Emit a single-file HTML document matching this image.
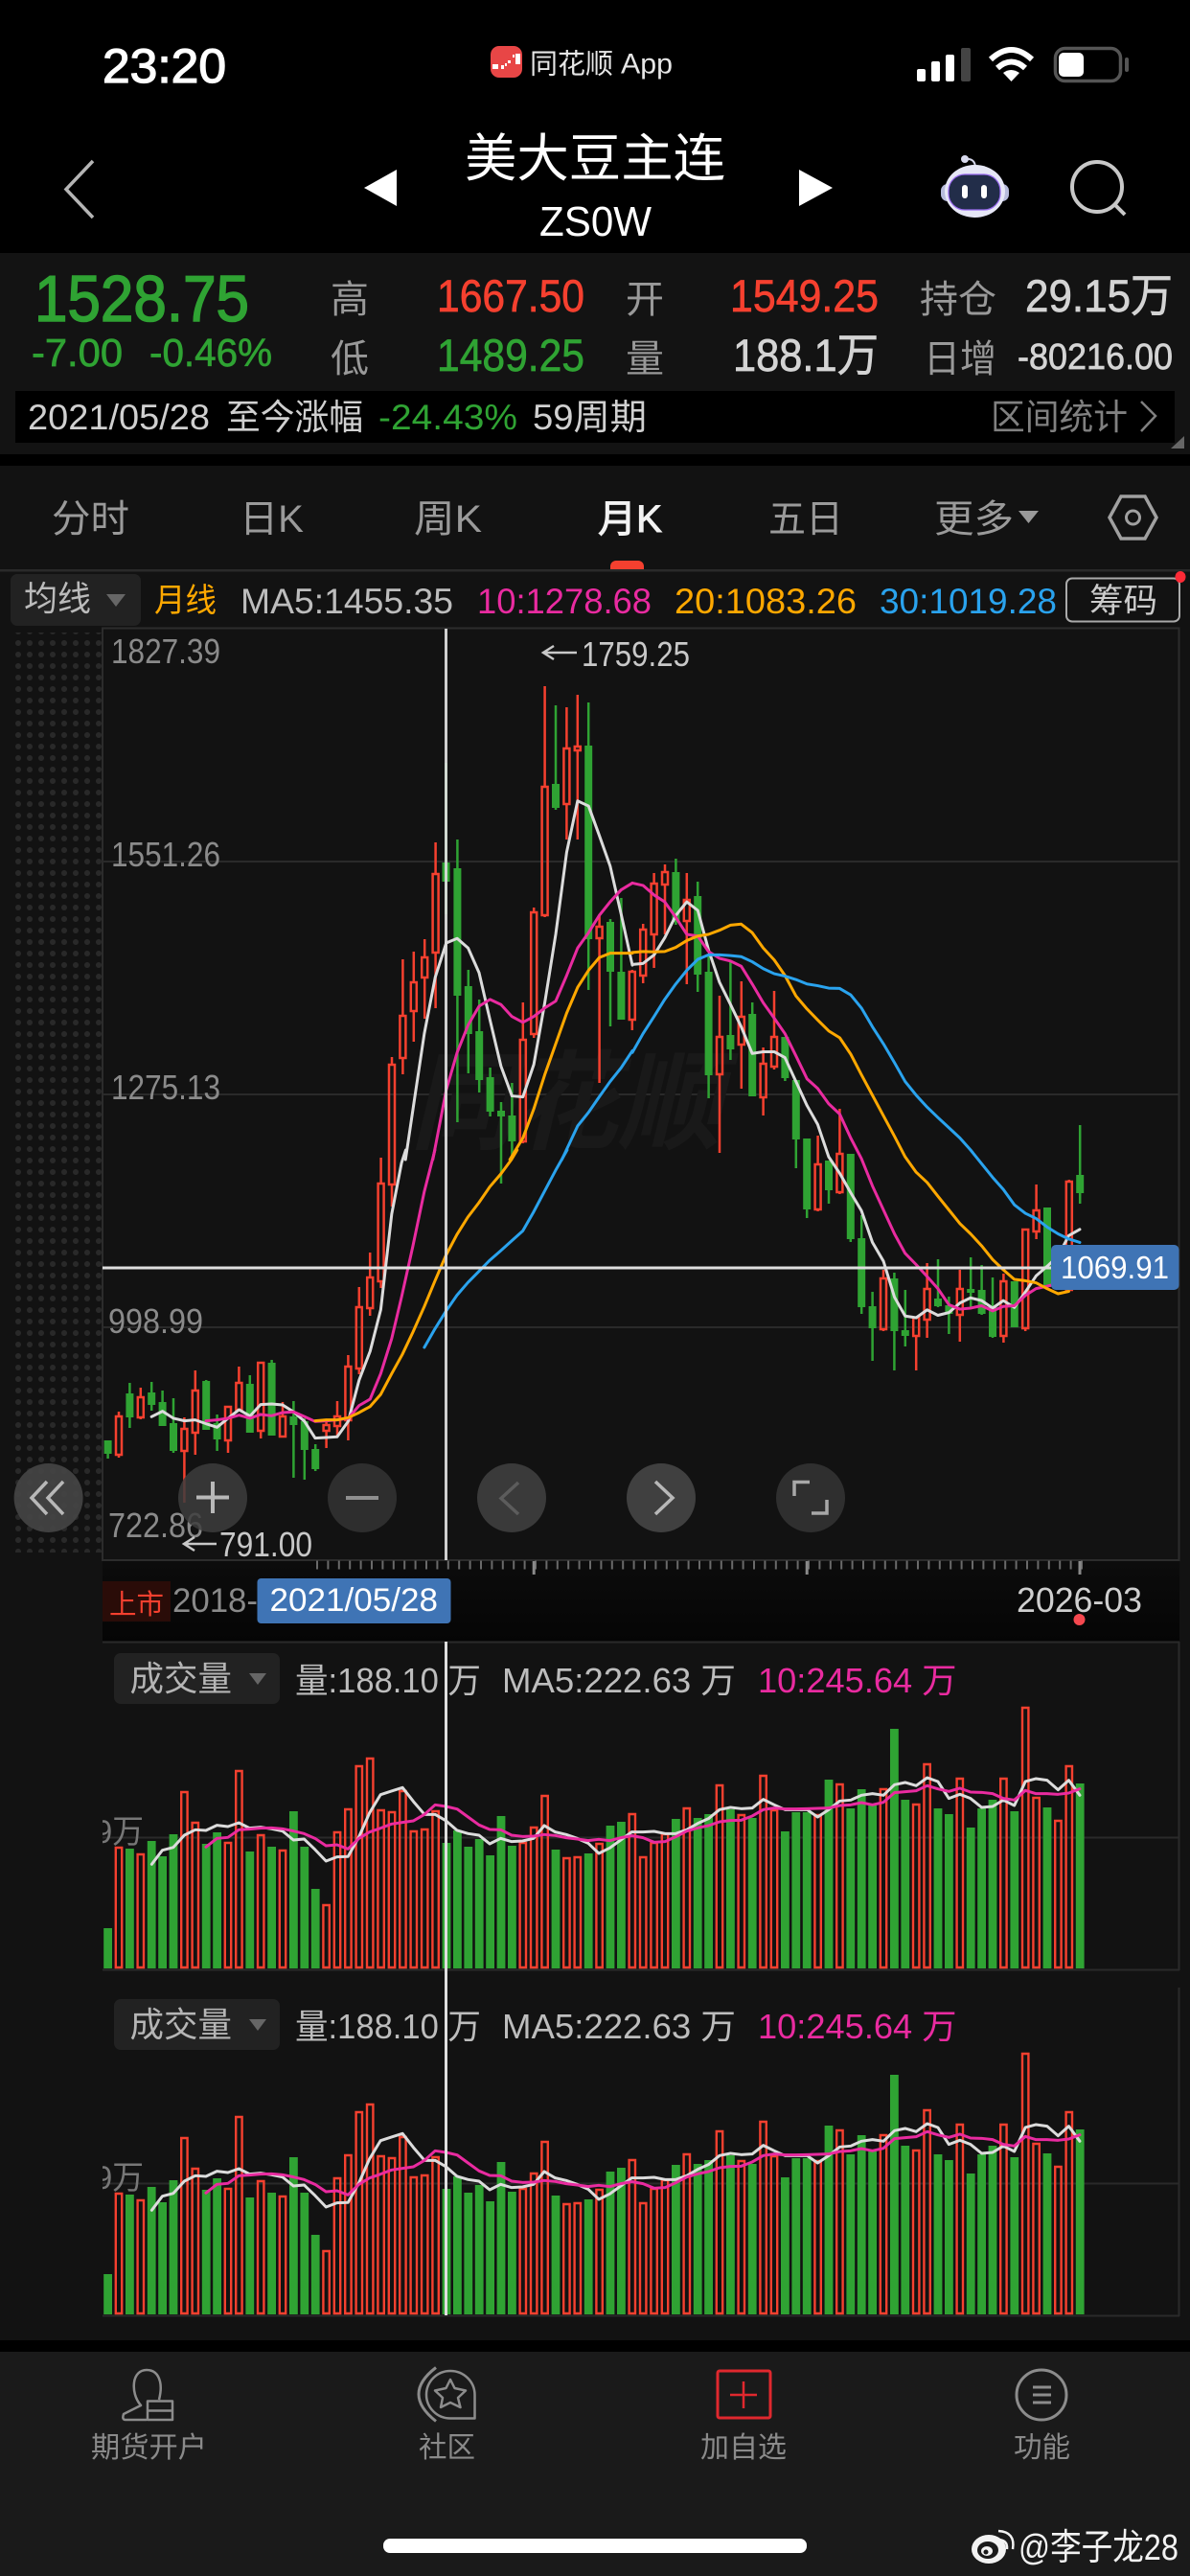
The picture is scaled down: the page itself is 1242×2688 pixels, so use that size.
<!DOCTYPE html>
<html lang="zh-CN">
<head>
<meta charset="utf-8">
<title>美大豆主连 ZS0W</title>
<style>
html,body{margin:0;padding:0;background:#000;width:1242px;height:2688px;overflow:hidden}
svg{display:block;font-family:"Liberation Sans","Noto Sans CJK SC",sans-serif}
text{white-space:pre}
.m{stroke-width:.7;paint-order:stroke}
.g{fill:#2fa333;stroke:#2fa333}
.r{fill:#f5402f;stroke:#f5402f}
.w{fill:#d4d4d4;stroke:#d4d4d4}
.l{fill:none;stroke-width:3;stroke-linejoin:round;stroke-linecap:round}
.l polyline,.l path{vector-effect:non-scaling-stroke;fill:none}
.n{fill:#8a8a8a;font-size:36px}
.t{font-size:40px;fill:#9a9a9a}
.b{font-size:30px;fill:#8a8a8a}
.v{font-size:36px;fill:#bdbdbd}
</style>
</head>
<body>
<svg xmlns="http://www.w3.org/2000/svg" width="1242" height="2688" viewBox="0 0 1242 2688">
<defs>
<pattern id="dots" x="13" y="5" width="12" height="12" patternUnits="userSpaceOnUse"><circle cx="6" cy="6" r="3" fill="#292929"/></pattern>
<linearGradient id="ax" x1="0" y1="0" x2="0" y2="1"><stop offset="0" stop-color="#0c0c0c"/><stop offset="1" stop-color="#050505"/></linearGradient>
<clipPath id="c1"><rect x="107" y="1880" width="60" height="60"/></clipPath>
<clipPath id="c2"><rect x="107" y="2241" width="60" height="60"/></clipPath>
<g id="vol">
<path fill="none" stroke="#2fa333" stroke-width="8.8" d="M112.6 2054V2012M135.4 2054V1929M158.2 2054V1921M169.6 2054V1937M181 2054V1914M215.2 2054V1924M226.6 2054V1912M260.8 2054V1932M283.6 2054V1927M306.4 2054V1890M317.8 2054V1927M329.2 2054V1971M466 2054V1923M477.4 2054V1910M488.8 2054V1927M500.2 2054V1919M511.6 2054V1936M523 2054V1895M534.4 2054V1926M580 2054V1930M614.2 2054V1934M637 2054V1905M648.4 2054V1901M705.4 2054V1898M728.2 2054V1897M739.6 2054V1893M762.4 2054V1888M785.2 2054V1897M819.4 2054V1911M830.8 2054V1891M842.2 2054V1891M865 2054V1857M887.8 2054V1887M899.2 2054V1867M910.6 2054V1884M933.4 2054V1804M944.8 2054V1878M979 2054V1887M990.4 2054V1893M1013.2 2054V1907M1024.6 2054V1887M1036 2054V1878M1058.8 2054V1890M1093 2054V1886M1127.2 2054V1861"/>
<path fill="none" stroke="#f5402f" stroke-width="2.4" d="M120.8 1928h6.4V2053h-6.4zM143.6 1935h6.4V2053h-6.4zM189.2 1870h6.4V2053h-6.4zM200.6 1902h6.4V2053h-6.4zM234.8 1923h6.4V2053h-6.4zM246.2 1848h6.4V2053h-6.4zM269 1915h6.4V2053h-6.4zM291.8 1931h6.4V2053h-6.4zM337.4 1988h6.4V2053h-6.4zM348.8 1912h6.4V2053h-6.4zM360.2 1888h6.4V2053h-6.4zM371.6 1843h6.4V2053h-6.4zM383 1835h6.4V2053h-6.4zM394.4 1889h6.4V2053h-6.4zM405.8 1891h6.4V2053h-6.4zM417.2 1869h6.4V2053h-6.4zM428.6 1911h6.4V2053h-6.4zM440 1909h6.4V2053h-6.4zM451.4 1890h6.4V2053h-6.4zM542.6 1923h6.4V2053h-6.4zM554 1907h6.4V2053h-6.4zM565.4 1874h6.4V2053h-6.4zM588.2 1939h6.4V2053h-6.4zM599.6 1938h6.4V2053h-6.4zM622.4 1924h6.4V2053h-6.4zM656.6 1893h6.4V2053h-6.4zM668 1938h6.4V2053h-6.4zM679.4 1923h6.4V2053h-6.4zM690.8 1914h6.4V2053h-6.4zM713.6 1887h6.4V2053h-6.4zM747.8 1863h6.4V2053h-6.4zM770.6 1894h6.4V2053h-6.4zM793.4 1853h6.4V2053h-6.4zM804.8 1889h6.4V2053h-6.4zM850.4 1894h6.4V2053h-6.4zM873.2 1862h6.4V2053h-6.4zM918.8 1867h6.4V2053h-6.4zM953 1883h6.4V2053h-6.4zM964.4 1841h6.4V2053h-6.4zM998.6 1856h6.4V2053h-6.4zM1044.2 1856h6.4V2053h-6.4zM1067 1782h6.4V2053h-6.4zM1078.4 1876h6.4V2053h-6.4zM1101.2 1900h6.4V2053h-6.4zM1112.6 1843h6.4V2053h-6.4z"/>
<g class="l" transform="translate(80 1720) scale(.3697 .3333)">
<polyline stroke="#dcdcdc" points="212,676 242,632 273,623 304,585 335,568 365,570 396,554 427,558 458,546 488,563 519,560 550,565 581,572 612,600 642,597 673,630 704,666 735,653 766,652 797,590 827,515 858,458 889,447 920,436 951,480 982,520 1012,520 1043,540 1074,570 1105,580 1136,585 1166,612 1197,595 1228,605 1259,603 1290,595 1320,555 1351,575 1382,583 1413,595 1444,610 1474,642 1505,625 1536,600 1567,575"/>
<polyline stroke="#e92ba0" points="365,622 396,595 427,592 458,568 488,566 519,563 550,562 581,565 612,572 642,580 673,595 704,618 735,615 766,628 797,595 827,575 858,563 889,550 920,545 951,540 982,520 1012,490 1043,495 1074,503 1105,528 1136,553 1166,567 1197,568 1228,585 1259,589 1290,588 1320,583 1351,586 1382,593 1413,597 1444,602 1474,598 1505,602 1536,593 1567,587"/>
</g>
<g class="l" transform="translate(660 1720) scale(.3712 .3333)">
<polyline stroke="#dcdcdc" points="0,575 30,575 61,573 92,580 122,580 153,568 184,548 214,533 245,505 276,498 306,502 337,500 368,473 399,490 429,505 460,505 491,505 521,528 552,505 583,478 614,475 644,460 675,455 706,460 737,427 767,420 798,430 829,405 859,417 890,470 921,457 951,470 982,498 1013,495 1043,475 1074,492 1105,417 1135,408 1166,413 1197,443 1227,413 1258,460"/>
<polyline stroke="#e92ba0" points="0,587 30,593 61,607 92,605 122,590 153,572 184,562 214,555 245,543 276,539 306,538 337,525 368,505 399,500 429,503 460,503 491,502 521,501 552,500 583,492 614,490 644,483 675,490 706,482 737,452 767,449 798,446 829,430 859,440 890,448 921,438 951,450 982,451 1013,455 1043,470 1074,475 1105,445 1135,455 1166,455 1197,457 1227,453 1258,440"/>
</g>
</g>
</defs>

<rect width="1242" height="2688" fill="#000"/>

<!-- status bar -->
<text x="107" y="86" font-size="50" fill="#fff" stroke="#fff" stroke-width="1.300" textLength="129" lengthAdjust="spacingAndGlyphs">23:20</text>
<rect x="512" y="48" width="33" height="33" rx="9" fill="#e84646"/>
<path d="M514 67h6v5h-6zM523 68h3v4h-3zM527 66h2v3h-2zM530 63h3v3h-3zM535 57h2v3h-2zM538 56h5v11h-5z" fill="#fff"/>
<text x="553" y="76.500" font-size="29" fill="#e6e6e6" textLength="87" lengthAdjust="spacingAndGlyphs">同花顺</text>
<text x="648" y="76.500" font-size="30" fill="#e6e6e6" textLength="54" lengthAdjust="spacingAndGlyphs">App</text>
<g fill="#fff">
<rect x="957" y="72" width="9" height="13" rx="2"/><rect x="972" y="64" width="9" height="21" rx="2"/><rect x="987" y="57" width="9" height="28" rx="2"/>
<rect x="1003" y="50" width="10" height="35" rx="2" fill="#444"/>
<path d="M1047 76Q1055 70 1064 76L1055.500 85Z"/>
</g>
<path d="M1034 62Q1055.500 42 1077 62M1041 71Q1055.500 58 1070 71" stroke="#fff" stroke-width="6" fill="none"/>
<rect x="1101.500" y="50.500" width="68" height="34" rx="10" fill="none" stroke="#555" stroke-width="3.500"/>
<rect x="1105" y="55" width="26" height="25" rx="5" fill="#fff"/>
<rect x="1174" y="60" width="4" height="15" rx="2" fill="#555"/>

<!-- nav header -->
<path d="M97 168L69 197.500L97 227" fill="none" stroke="#b5b5b5" stroke-width="3.500"/>
<polygon points="414,177 414,215 380,196" fill="#fff"/>
<polygon points="834,177 834,215 869,196" fill="#fff"/>
<text x="485" y="184" font-size="54" fill="#fff" textLength="272" lengthAdjust="spacingAndGlyphs">美大豆主连</text>
<text x="563" y="246" font-size="44" fill="#fff" textLength="117" lengthAdjust="spacingAndGlyphs">ZS0W</text>
<!-- robot -->
<path d="M1008 166Q1017 165 1018 174" fill="none" stroke="#d4d6ea" stroke-width="2"/>
<circle cx="1007" cy="166" r="4" fill="#d8daee"/>
<rect x="982" y="192" width="71" height="18" rx="7" fill="#b7bbdc"/>
<ellipse cx="1017.500" cy="199.500" rx="31.500" ry="27.500" fill="#e6e7f6"/>
<rect x="990" y="182" width="54" height="37" rx="17" fill="#222d49" stroke="#9a6bf0" stroke-width="1.200"/>
<rect x="1004" y="193" width="6" height="14" rx="3" fill="#fff"/>
<rect x="1024" y="193" width="6" height="14" rx="3" fill="#fff"/>
<!-- search -->
<circle cx="1145" cy="195" r="26" fill="none" stroke="#c8c8c8" stroke-width="4"/>
<path d="M1163 213L1174 224" stroke="#c8c8c8" stroke-width="4"/>

<!-- stats panel -->
<rect x="0" y="264" width="1242" height="210" fill="#131313"/>
<text class="g" x="36" y="335" font-size="68" stroke-width="1.600" textLength="224" lengthAdjust="spacingAndGlyphs">1528.75</text>
<text class="g m" x="33" y="382" font-size="41" textLength="95" lengthAdjust="spacingAndGlyphs">-7.00</text>
<text class="g m" x="156" y="382" font-size="41" textLength="128" lengthAdjust="spacingAndGlyphs">-0.46%</text>
<g font-size="40" fill="#999">
<text x="345" y="326">高</text><text x="345" y="388">低</text><text x="653" y="326">开</text><text x="653" y="388">量</text>
<text x="960" y="326" textLength="80" lengthAdjust="spacingAndGlyphs">持仓</text><text x="964" y="388" textLength="76" lengthAdjust="spacingAndGlyphs">日增</text>
</g>
<g font-size="47">
<text class="r m" x="456" y="325" textLength="154" lengthAdjust="spacingAndGlyphs">1667.50</text>
<text class="r m" x="762" y="325" textLength="155" lengthAdjust="spacingAndGlyphs">1549.25</text>
<text class="g m" x="456" y="387" textLength="154" lengthAdjust="spacingAndGlyphs">1489.25</text>
<text class="w m" x="765" y="387" textLength="152" lengthAdjust="spacingAndGlyphs">188.1万</text>
<text class="w m" x="1070" y="325" textLength="154" lengthAdjust="spacingAndGlyphs">29.15万</text>
</g>
<text class="w m" x="1062" y="385" font-size="38" textLength="162" lengthAdjust="spacingAndGlyphs">-80216.00</text>
<rect x="16" y="408" width="1210" height="54" fill="#000"/>
<g font-size="37">
<text x="29" y="448" fill="#d0d0d0" textLength="190" lengthAdjust="spacingAndGlyphs">2021/05/28</text>
<text x="236" y="448" fill="#d0d0d0" textLength="143" lengthAdjust="spacingAndGlyphs">至今涨幅</text>
<text x="395" y="448" fill="#2fa333" textLength="145" lengthAdjust="spacingAndGlyphs">-24.43%</text>
<text x="556" y="448" fill="#d0d0d0" textLength="119" lengthAdjust="spacingAndGlyphs">59周期</text>
<text x="1034" y="448" fill="#808080" textLength="143" lengthAdjust="spacingAndGlyphs">区间统计</text>
</g>
<path d="M1191 419L1206 434L1191 450" fill="none" stroke="#808080" stroke-width="2.500"/>
<polygon points="1236,455 1236,468 1222,468" fill="#666"/>

<!-- main panel bg -->
<rect x="0" y="486" width="1242" height="1956" fill="#121212"/>
<g class="t">
<text x="54" y="555" textLength="81" lengthAdjust="spacingAndGlyphs">分时</text>
<text x="250" y="555" textLength="67" lengthAdjust="spacingAndGlyphs">日K</text>
<text x="432" y="555" textLength="71" lengthAdjust="spacingAndGlyphs">周K</text>
<text x="624" y="555" stroke="#f2f2f2" stroke-width="1" textLength="67" lengthAdjust="spacingAndGlyphs" style="fill:#f2f2f2">月K</text>
<text x="802" y="555" textLength="78" lengthAdjust="spacingAndGlyphs">五日</text>
<text x="975" y="555" textLength="83" lengthAdjust="spacingAndGlyphs">更多</text>
</g>
<polygon points="1063,533 1084,533 1073.500,546" fill="#999"/>
<polygon points="1158,540 1170,518 1195,518 1207,540 1195,562 1170,562" fill="none" stroke="#a0a0a0" stroke-width="3.500"/>
<circle cx="1182.500" cy="540" r="7" fill="none" stroke="#a0a0a0" stroke-width="3"/>
<path d="M637 594V591a6 6 0 0 1 6-6h23a6 6 0 0 1 6 6v3z" fill="#f5402f"/>
<rect x="0" y="594" width="1242" height="2.500" fill="#2a2a2a"/>

<!-- MA row -->
<rect x="11" y="599" width="136" height="54" rx="7" fill="#222"/>
<text x="25" y="637" font-size="36" fill="#bbb" textLength="70" lengthAdjust="spacingAndGlyphs">均线</text>
<polygon points="111,620 131,620 121,633" fill="#666"/>
<g font-size="37">
<text x="161" y="638" fill="#ffa800" font-size="34" textLength="65" lengthAdjust="spacingAndGlyphs">月线</text>
<text x="251" y="640" fill="#bdbdbd" textLength="222" lengthAdjust="spacingAndGlyphs">MA5:1455.35</text>
<text x="498" y="640" fill="#e92ba0" textLength="182" lengthAdjust="spacingAndGlyphs">10:1278.68</text>
<text x="704" y="640" fill="#ffa800" textLength="190" lengthAdjust="spacingAndGlyphs">20:1083.26</text>
<text x="918" y="640" fill="#2aa3ee" textLength="185" lengthAdjust="spacingAndGlyphs">30:1019.28</text>
</g>
<rect x="1113" y="603.500" width="118" height="45" rx="6" fill="none" stroke="#aaa" stroke-width="2"/>
<text x="1137" y="639" font-size="35" fill="#ccc" textLength="71" lengthAdjust="spacingAndGlyphs">筹码</text>
<ellipse cx="1232" cy="602" rx="5.500" ry="6" fill="#ff2a36"/>

<!-- dots -->
<rect x="13" y="660" width="94" height="960" fill="url(#dots)"/>

<!-- chart frame -->
<rect x="107" y="655.500" width="1123.500" height="972.500" fill="#121212" stroke="#2c2c2c" stroke-width="2"/>
<g stroke="#2a2a2a" stroke-width="2"><path d="M107 899H1230M107 1142H1230M107 1385H1230"/></g>
<text x="428" y="1190" font-size="112" font-style="italic" font-weight="700" fill="#191919" textLength="325" lengthAdjust="spacingAndGlyphs">同花顺</text>

<g class="n">
<text x="116" y="692" textLength="114" lengthAdjust="spacingAndGlyphs">1827.39</text>
<text x="116" y="904" textLength="114" lengthAdjust="spacingAndGlyphs">1551.26</text>
<text x="116" y="1147" textLength="114" lengthAdjust="spacingAndGlyphs">1275.13</text>
<text x="113" y="1391" textLength="99" lengthAdjust="spacingAndGlyphs">998.99</text>
<text x="113" y="1604" textLength="99" lengthAdjust="spacingAndGlyphs">722.86</text>
</g>
<path d="M602 681H568M578 674L567 681L578 688" fill="none" stroke="#c8c8c8" stroke-width="2.500"/>
<text x="607" y="695" font-size="36" fill="#c8c8c8" textLength="113" lengthAdjust="spacingAndGlyphs">1759.25</text>

<!-- green candles -->
<path fill="none" stroke="#2fa333" stroke-width="2.500" d="M112.6 1503V1522M135.4 1443V1490M158.2 1442V1472M169.6 1451V1488M181 1459V1516M215.2 1440V1492M226.6 1476V1514M260.8 1435V1495M283.6 1419V1498M306.4 1462V1542M317.8 1480V1544M329.2 1507V1535M465.500 796V954M477.4 876V1171M488.8 1012V1120M500.2 1043V1140M511.6 1114V1165M523 1150V1235M534.4 1130V1207M580 736V845M614.2 733V1033M637 959V1071M648.4 937V1064M705.4 896V965M728.2 920V1035M739.6 996V1146M762.4 1004V1106M785.2 1046V1144M819.4 1082V1128M830.8 1127V1219M842.2 1188V1271M865 1211V1256M887.8 1204V1296M899.2 1268V1371M910.6 1348V1420M933.4 1328V1430M944.8 1346V1405M979 1314V1364M990.4 1353V1392M1013.2 1312V1364M1024.6 1320V1372M1036 1333V1396M1058.8 1337V1385M1093 1260V1343M1104.4 1300V1345M1127.2 1174V1256"/>
<path fill="none" stroke="#2fa333" stroke-width="8" d="M112.6 1503V1517M135.4 1454V1479M158.2 1453V1466M169.6 1463V1488M181 1485V1514M215.2 1441V1492M226.6 1485V1502M260.8 1444V1495M283.6 1422V1498M306.4 1478V1487M317.8 1483V1513M329.2 1512V1533M465.500 900V920M477.4 906V1039M488.8 1029V1079M500.2 1076V1127M511.6 1124V1160M523 1159V1165M534.4 1164V1191M580 818V843M614.2 778V980M637 962V1014M648.4 1014V1064M705.4 910V962M728.2 935V1017M739.6 1014V1122M762.4 1080V1095M785.2 1058V1144M819.4 1082V1125M830.8 1127V1189M842.2 1188V1262M865 1211V1242M887.8 1204V1293M899.2 1292V1364M910.6 1363V1386M933.4 1334V1389M944.8 1388V1394M979 1355V1363M990.4 1362V1371M1013.2 1345V1349M1024.6 1346V1371M1036 1364V1395M1058.8 1337V1385M1093 1260V1343M1104.4 1300V1345M1127.2 1226V1245"/>
<!-- red candles -->
<path fill="none" stroke="#f5402f" stroke-width="2.500" d="M124 1473V1478M121 1478h6V1518h-6zM124 1518V1521M146.8 1448V1458M143.8 1458h6V1479h-6zM146.8 1479V1481M192.4 1479V1491M189.4 1491h6V1514h-6zM192.4 1514V1568M203.8 1430V1451M200.8 1451h6V1495h-6zM203.8 1495V1518M238 1467V1468M235 1468h6V1503h-6zM238 1503V1516M249.4 1426V1443M246.4 1443h6V1471h-6zM249.4 1471V1472M272.2 1422V1422M269.2 1422h6V1493h-6zM272.2 1493V1501M295 1463V1478M292 1478h6V1499h-6zM295 1499V1500M340.6 1483V1487M337.6 1487h6V1493h-6zM340.6 1493V1511M352 1462V1478M349 1478h6V1488h-6zM352 1488V1498M363.4 1414V1426M360.4 1426h6V1482h-6zM363.4 1482V1503M374.8 1343V1364M371.8 1364h6V1428h-6zM374.8 1428V1434M386.2 1307V1333M383.2 1333h6V1365h-6zM386.2 1365V1373M397.6 1208V1235M394.6 1235h6V1337h-6zM397.6 1337V1344M409 1103V1111M406 1111h6V1236h-6zM409 1236V1259M420.4 1001V1060M417.4 1060h6V1104h-6zM420.4 1104V1121M431.8 993V1025M428.8 1025h6V1055h-6zM431.8 1055V1087M443.2 980V999M440.2 999h6V1020h-6zM443.2 1020V1063M454.6 879V912M451.6 912h6V994h-6zM454.6 994V1052M545.8 1046V1085M542.8 1085h6V1191h-6zM545.8 1191V1193M557.2 947V952M554.2 952h6V1079h-6zM557.2 1079V1083M568.6 716V821M565.6 821h6V955h-6zM568.6 955V957M591.4 738V781M588.4 781h6V839h-6zM591.4 839V876M602.8 725V779M599.8 779h6V783h-6zM602.8 783V876M625.6 955V967M622.6 967h6V979h-6zM625.6 979V1130M659.8 1012V1014M656.8 1014h6V1064h-6zM659.8 1064V1075M671.2 964V970M668.2 970h6V1018h-6zM671.2 1018V1026M682.6 911V922M679.6 922h6V975h-6zM682.6 975V1010M694 902V910M691 910h6V923h-6zM694 923V975M716.8 911V939M713.8 939h6V961h-6zM716.8 961V1027M751 1039V1082M748 1082h6V1121h-6zM751 1121V1203M773.8 1024V1061M770.8 1061h6V1090h-6zM773.8 1090V1136M796.6 1093V1110M793.6 1110h6V1145h-6zM796.6 1145V1164M808 1034V1082M805 1082h6V1113h-6zM808 1113V1116M853.6 1185V1215M850.6 1215h6V1262h-6zM853.6 1262V1264M876.4 1157V1204M873.4 1204h6V1244h-6zM876.4 1244V1246M922 1325V1334M919 1334h6V1387h-6zM922 1387V1389M956.2 1375V1375M953.2 1375h6V1394h-6zM956.2 1394V1430M967.6 1318V1345M964.6 1345h6V1377h-6zM967.6 1377V1396M1001.8 1325V1345M998.8 1345h6V1372h-6zM1001.8 1372V1400M1047.4 1329V1337M1044.4 1337h6V1394h-6zM1047.4 1394V1401M1070.2 1282V1283M1067.2 1283h6V1386h-6zM1070.2 1386V1389M1081.6 1236V1263M1078.6 1263h6V1285h-6zM1081.6 1285V1293M1115.8 1231V1233M1112.8 1233h6V1346h-6z"/>

<!-- MA lines -->
<g class="l" transform="translate(0 1200) scale(.3954 .3333)">
<polyline stroke="#dcdcdc" points="400,835 429,818 458,840 487,848 515,845 544,857 573,868 602,840 631,813 660,833 688,797 717,795 746,798 775,820 804,850 832,902 861,900 890,898 919,850 948,720 977,630 1005,500 1034,200 1060,40 1071,0"/>
<polyline stroke="#e92ba0" points="544,848 573,845 602,840 631,830 660,840 688,828 717,832 746,822 775,820 804,835 832,850 861,848 890,845 919,840 948,800 977,780 1005,700 1034,590 1060,460 1090,300 1120,130 1148,0"/>
<polyline stroke="#ffa800" points="832,848 861,845 890,845 919,838 948,822 977,803 1005,765 1034,700 1062,640 1090,570 1120,490 1148,410 1177,330 1206,265 1235,210 1264,165 1293,115 1322,75 1350,30 1365,0"/>
<polyline stroke="#2aa3ee" points="1120,618 1148,560 1177,505 1206,455 1235,415 1264,380 1293,345 1322,315 1350,285 1380,253 1408,195 1437,130 1466,65 1497,0"/>
</g>
<g class="l" transform="translate(100 650) scale(.35714)">
<polyline stroke="#dcdcdc" points="905,1568 930,1400 960,1200 992,1035 1024,935 1056,922 1088,950 1120,1022 1152,1160 1184,1295 1216,1382 1248,1385 1280,1290 1312,1110 1344,910 1376,670 1408,520 1440,535 1471,620 1503,710 1535,850 1568,1000"/>
<polyline stroke="#e92ba0" points="985,1568 1024,1365 1056,1255 1088,1175 1120,1120 1152,1100 1184,1115 1216,1150 1248,1167 1280,1150 1312,1125 1344,1105 1376,1030 1408,950 1440,905 1471,855 1503,815 1535,780 1568,760"/>
<polyline stroke="#ffa800" points="1210,1568 1248,1505 1280,1420 1312,1320 1344,1230 1376,1140 1408,1065 1440,1015 1471,978 1503,965 1535,965 1568,965"/>
<polyline stroke="#2aa3ee" points="1362,1568 1408,1470 1440,1430 1471,1385 1503,1340 1535,1300 1568,1250"/>
</g>
<g class="l" transform="translate(660 850) scale(.3712 .35714)">
<polyline stroke="#dcdcdc" points="0,438 30,435 61,410 91,360 122,295 153,255 184,280 214,395 245,490 276,555 306,620 337,698 368,693 399,693 429,710 460,780 491,850 521,905 552,1000 583,1048 614,1105 644,1157 675,1250 706,1305 737,1410 767,1465 798,1470 829,1447 859,1463 890,1455 921,1427 951,1412 982,1420 1013,1442 1043,1420 1074,1440 1105,1395 1135,1348 1166,1320 1197,1290 1227,1230 1258,1212"/>
<polyline stroke="#e92ba0" points="0,200 30,207 61,235 91,255 122,300 153,350 184,355 214,400 245,420 276,428 306,443 337,495 368,550 399,595 429,640 460,705 491,772 521,800 552,845 583,875 614,945 644,1005 675,1085 706,1155 737,1225 767,1282 798,1315 829,1350 859,1385 890,1432 921,1445 951,1442 982,1435 1013,1450 1043,1437 1074,1435 1105,1405 1135,1385 1166,1378 1197,1370"/>
<polyline stroke="#ffa800" points="0,403 30,400 61,401 91,400 122,388 153,368 184,355 214,350 245,338 276,323 306,320 337,345 368,390 399,425 429,470 460,530 491,568 521,600 552,632 583,652 614,700 644,760 675,820 706,880 737,940 767,1000 798,1045 829,1075 859,1115 890,1155 921,1195 951,1225 982,1260 1013,1300 1043,1330 1074,1358 1105,1362 1135,1368 1166,1385 1197,1400 1227,1393"/>
<polyline stroke="#2aa3ee" points="0,695 30,640 61,590 91,540 122,495 153,455 184,423 214,410 245,410 276,412 306,415 337,430 368,450 399,465 429,472 460,482 491,495 521,500 552,507 583,508 614,527 644,565 675,620 706,670 737,725 767,780 798,820 829,855 859,885 890,915 921,945 951,980 982,1020 1013,1060 1043,1095 1074,1140 1105,1165 1135,1180 1166,1205 1197,1225 1227,1240 1258,1250"/>
</g>

<!-- arrow label low -->
<path d="M226 1611H193M203 1604L192 1611L203 1618" fill="none" stroke="#c8c8c8" stroke-width="2.500"/>
<text x="229" y="1624" font-size="36" fill="#c8c8c8" textLength="97" lengthAdjust="spacingAndGlyphs">791.00</text>

<!-- crosshair -->
<rect x="464" y="656" width="3" height="972" fill="#dedede" fill-opacity=".92"/>
<rect x="107" y="1321.500" width="990" height="3" fill="#dedede"/>
<rect x="1097" y="1299" width="133.500" height="47" rx="5" fill="#3f74b5"/>
<text x="1107" y="1334" font-size="33" fill="#fff" textLength="113" lengthAdjust="spacingAndGlyphs">1069.91</text>

<!-- floating buttons -->
<g fill="#fff">
<circle cx="50.600" cy="1563" r="36" fill="#434343" fill-opacity=".95"/>
<circle cx="222" cy="1563" r="36" fill="#3d3d3d" fill-opacity=".85"/>
<circle cx="378" cy="1563" r="36" fill="#2e2e2e"/>
<circle cx="534" cy="1563" r="36" fill="#3a3a3a"/>
<circle cx="690" cy="1563" r="36" fill="#404040"/>
<circle cx="846" cy="1563" r="36" fill="#2f2f2f"/>
</g>
<g fill="none" stroke-width="3.500">
<path d="M49 1546L33 1563L49 1580M66 1546L50 1563L66 1580" stroke="#b8b8b8"/>
<path d="M205 1562.500H239M222 1546V1579" stroke="#b8b8b8" stroke-width="4"/>
<path d="M361 1563H395" stroke="#8f8f8f" stroke-width="4"/>
<path d="M541 1547L523 1563.500L541 1580" stroke="#5c5c5c"/>
<path d="M684 1546L702 1563L684 1580" stroke="#b8b8b8"/>
<path d="M829 1561V1546.500H845M863 1565V1579H847" stroke="#a8a8a8"/>
</g>

<!-- date axis -->
<rect x="107" y="1629" width="1124" height="84" fill="url(#ax)"/>
<path d="M330 1633H1130" stroke="#6a6a6a" stroke-width="9" stroke-dasharray="2 9.400"/>
<path d="M557.200 1629V1643M842.200 1629V1643M1127 1629V1643" stroke="#8a8a8a" stroke-width="3"/>
<rect x="107" y="1650" width="71" height="42" fill="#2a0c08"/>
<text x="114" y="1684" font-size="29" fill="#f5402f" textLength="57" lengthAdjust="spacingAndGlyphs">上市</text>
<text x="180" y="1682" font-size="35" fill="#8a8a8a" textLength="89" lengthAdjust="spacingAndGlyphs">2018-</text>
<rect x="268.500" y="1647" width="202" height="47" rx="4" fill="#3f74b5"/>
<text x="281.500" y="1681" font-size="34" fill="#fff" textLength="175.500" lengthAdjust="spacingAndGlyphs">2021/05/28</text>
<text x="1061" y="1682" font-size="36" fill="#cfcfcf" textLength="131" lengthAdjust="spacingAndGlyphs">2026-03</text>
<circle cx="1126.500" cy="1690" r="6" fill="#f5484f"/>

<!-- volume panel 1 -->
<path d="M107 1713.500H1231M1230.500 1713V2056M107 2055.500H1231M107 1917.500H1230" stroke="#2a2a2a" stroke-width="2" fill="none"/>
<rect x="119" y="1725" width="173" height="53" rx="7" fill="#222"/>
<text x="135.500" y="1764" font-size="36" fill="#b5b5b5" textLength="106.500" lengthAdjust="spacingAndGlyphs">成交量</text>
<polygon points="260,1746 278,1746 269,1758" fill="#666"/>
<g class="v">
<text x="308" y="1766" textLength="194" lengthAdjust="spacingAndGlyphs">量:188.10 万</text>
<text x="524" y="1766" textLength="244" lengthAdjust="spacingAndGlyphs">MA5:222.63 万</text>
<text x="791" y="1766" fill="#e92ba0" style="fill:#e92ba0" textLength="207.500" lengthAdjust="spacingAndGlyphs">10:245.64 万</text>
</g>
<text x="99" y="1923" font-size="34" fill="#777" textLength="51" lengthAdjust="spacingAndGlyphs" clip-path="url(#c1)">9万</text>
<use href="#vol"/>

<!-- volume panel 2 -->
<path d="M1230.500 2074V2417M107 2416.500H1231M107 2278.500H1230" stroke="#2a2a2a" stroke-width="2" fill="none"/>
<rect x="119" y="2086" width="173" height="53" rx="7" fill="#222"/>
<text x="135.500" y="2125" font-size="36" fill="#b5b5b5" textLength="106.500" lengthAdjust="spacingAndGlyphs">成交量</text>
<polygon points="260,2107 278,2107 269,2119" fill="#666"/>
<g class="v">
<text x="308" y="2127" textLength="194" lengthAdjust="spacingAndGlyphs">量:188.10 万</text>
<text x="524" y="2127" textLength="244" lengthAdjust="spacingAndGlyphs">MA5:222.63 万</text>
<text x="791" y="2127" fill="#e92ba0" style="fill:#e92ba0" textLength="207.500" lengthAdjust="spacingAndGlyphs">10:245.64 万</text>
</g>
<text x="99" y="2284" font-size="34" fill="#777" textLength="51" lengthAdjust="spacingAndGlyphs" clip-path="url(#c2)">9万</text>
<use href="#vol" y="361"/>

<!-- crosshair through volume -->
<rect x="464" y="1713" width="3" height="703" fill="#dedede"/>

<!-- bottom nav -->
<rect x="0" y="2442" width="1242" height="12" fill="#000"/>
<rect x="0" y="2454" width="1242" height="234" fill="#1a1a1a"/>
<g fill="none" stroke="#8c8c8c" stroke-width="2.500" stroke-linejoin="round">
<path d="M166 2504C168 2496 168 2489 167 2485C165 2477 160 2473 153 2473C146 2473 141 2478 140 2486C139 2494 141 2503 147 2510L129 2519Q127 2525 131 2525H153M154 2505.500H180V2525H154ZM154 2515.500H180"/>
<path d="M455 2470.500Q419 2498 455 2526.500" stroke-width="3"/>
<path d="M470 2474A25.500 25 0 0 1 495.500 2499V2523.500H470A25 24.750 0 0 1 470 2474Z"/>
<polygon points="470,2483 474.500,2492 486,2494.500 478,2502 480.500,2512 470,2507 460,2512 462,2502 454,2494.500 465.500,2492"/>
</g>
<rect x="749" y="2474" width="55" height="49" rx="2" fill="none" stroke="#e0282e" stroke-width="3"/>
<path d="M762 2499H790M776 2485V2513" stroke="#e0282e" stroke-width="2.500"/>
<ellipse cx="1087" cy="2499" rx="26" ry="26" fill="none" stroke="#8c8c8c" stroke-width="3"/>
<path d="M1078 2491H1097M1078 2499H1097M1078 2507H1097" stroke="#8c8c8c" stroke-width="3"/>
<g class="b">
<text x="95" y="2564" textLength="121" lengthAdjust="spacingAndGlyphs">期货开户</text>
<text x="437" y="2564" textLength="59" lengthAdjust="spacingAndGlyphs">社区</text>
<text x="731" y="2564" textLength="90" lengthAdjust="spacingAndGlyphs">加自选</text>
<text x="1058" y="2564" textLength="59" lengthAdjust="spacingAndGlyphs">功能</text>
</g>
<rect x="400" y="2649" width="442" height="15" rx="7" fill="#fff"/>

<!-- weibo watermark -->
<ellipse cx="1032" cy="2660" rx="18" ry="15" fill="#f2f2f2"/>
<ellipse cx="1031" cy="2661" rx="11" ry="9" fill="#1a1a1a"/>
<ellipse cx="1030" cy="2662" rx="6" ry="5" fill="#f2f2f2"/>
<circle cx="1029" cy="2663" r="2.500" fill="#1a1a1a"/>
<path d="M1041 2650Q1052 2650 1051 2660M1042 2641Q1060 2642 1057 2660" fill="none" stroke="#f2f2f2" stroke-width="2.500"/>
<text x="1063" y="2671" font-size="38" fill="#f2f2f2" textLength="167" lengthAdjust="spacingAndGlyphs">@李子龙28</text>
</svg>
</body>
</html>
